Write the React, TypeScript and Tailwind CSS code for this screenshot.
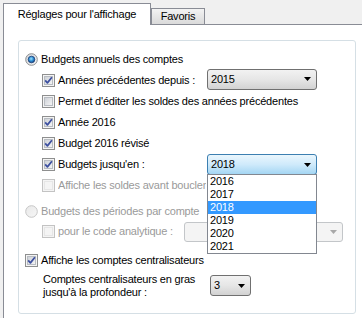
import React from "react";

function CheckBox({ checked = false, disabled = false }: { checked?: boolean; disabled?: boolean }) {
  return (
    <svg width="13" height="13" viewBox="0 0 13 13" className="shrink-0">
      <defs>
        <linearGradient id={`cbg${disabled ? "d" : "n"}`} x1="0" y1="0" x2="1" y2="1">
          <stop offset="0" stopColor={disabled ? "#f4f4f4" : "#cbcfd5"} />
          <stop offset="1" stopColor={disabled ? "#f4f4f4" : "#f7f7f7"} />
        </linearGradient>
      </defs>
      <rect x="0.5" y="0.5" width="12" height="12" fill="#f4f4f4" stroke={disabled ? "#c3c3c3" : "#8e8f8f"} />
      <rect x="2.5" y="2.5" width="8" height="8" fill={`url(#cbg${disabled ? "d" : "n"})`} stroke={disabled ? "#e6e6e6" : "#b8bcc2"} />
      {checked && (
        <path d="M3.2 6.4 L5.4 8.9 L9.9 3.2" fill="none" stroke="#3c4fa0" strokeWidth="1.7" strokeLinejoin="round" />
      )}
    </svg>
  );
}

function Radio({ checked = false, disabled = false }: { checked?: boolean; disabled?: boolean }) {
  return (
    <svg width="13" height="13" viewBox="0 0 13 13" className="shrink-0">
      <defs>
        <linearGradient id={`rg${disabled ? "d" : "n"}`} x1="0" y1="0" x2="1" y2="1">
          <stop offset="0" stopColor={disabled ? "#e8e8e8" : "#cbcfd5"} />
          <stop offset="1" stopColor={disabled ? "#f7f7f7" : "#f7f7f7"} />
        </linearGradient>
        <radialGradient id="rdot" cx="0.45" cy="0.4" r="0.6">
          <stop offset="0" stopColor="#9ce2fb" />
          <stop offset="0.55" stopColor="#2f8fd6" />
          <stop offset="1" stopColor="#14437f" />
        </radialGradient>
      </defs>
      <circle cx="6.5" cy="6.5" r="5.8" fill={`url(#rg${disabled ? "d" : "n"})`} stroke={disabled ? "#c6c6c6" : "#8e8f8f"} strokeWidth="1" />
      {checked && <circle cx="6.5" cy="6.5" r="3.3" fill="url(#rdot)" stroke="#1b3f78" strokeWidth="0.8" />}
    </svg>
  );
}

function Arrow({ color = "#000" }: { color?: string }) {
  return (
    <svg width="7" height="4" viewBox="0 0 7 4" className="shrink-0">
      <path d="M0 0 H7 L3.5 4 Z" fill={color} />
    </svg>
  );
}

export default function App() {
  return (
    <div className="w-[362px] h-[318px] overflow-hidden bg-[#f0f0f0] text-[11px] leading-[13px] tracking-[-0.2px] text-black font-['Liberation_Sans',Arial,sans-serif]">
      {/* Tabs */}
      <div className="relative z-10 -mb-px flex h-[25px] items-end pl-[3px]">
        <div className="flex h-[22px] w-[148px] items-center justify-center border border-b-0 border-[#898c95] bg-white">
          Réglages pour l'affichage
        </div>
        <div className="mb-px flex h-[16px] w-[54px] items-center justify-center border border-b-0 border-[#898c95] bg-gradient-to-b from-[#f3f3f3] to-[#dadada]">
          Favoris
        </div>
      </div>

      {/* Panel */}
      <div className="ml-[3px] h-[294px] border-l border-t border-[#898c95] bg-white pl-[14px] pt-[15px]">
        <div className="relative h-[274px] w-[338px] rounded-[3px] border border-[#d5dfe5] px-[6px]">
          {/* Row 1 */}
          <div className="mt-[8px] flex h-[21px] items-center gap-[3px]">
            <Radio checked />
            <span>Budgets annuels des comptes</span>
          </div>
          {/* Row 2 */}
          <div className="flex h-[21px] items-center pl-[17px]">
            <CheckBox checked />
            <span className="ml-[3px] w-[149px]">Années précédentes depuis :</span>
            <div className="-mt-[3px] flex h-[21px] w-[110px] items-center justify-between rounded-[3px] border border-[#707070] bg-gradient-to-b from-[#f2f2f2] via-[#e6e6e6] to-[#d2d2d2] pl-[3px] pr-[5px]">
              <span className="text-[11px]">2015</span>
              <Arrow />
            </div>
          </div>
          {/* Row 3 */}
          <div className="flex h-[21px] items-center gap-[3px] pl-[17px]">
            <CheckBox />
            <span>Permet d'éditer les soldes des années précédentes</span>
          </div>
          {/* Row 4 */}
          <div className="flex h-[21px] items-center gap-[3px] pl-[17px]">
            <CheckBox checked />
            <span>Année 2016</span>
          </div>
          {/* Row 5 */}
          <div className="flex h-[21px] items-center gap-[3px] pl-[17px]">
            <CheckBox checked />
            <span>Budget 2016 révisé</span>
          </div>
          {/* Row 6 */}
          <div className="flex h-[21px] items-center pl-[17px]">
            <CheckBox checked />
            <span className="ml-[3px] w-[149px]">Budgets jusqu'en :</span>
            <div className="relative z-20">
              <div className="flex h-[21px] w-[110px] items-center justify-between rounded-[3px] border border-[#3c7fb1] bg-gradient-to-b from-[#eaf6fd] via-[#cfeafb] to-[#a4d6f3] pl-[3px] pr-[5px]">
                <span>2018</span>
                <Arrow />
              </div>
              <div className="absolute left-0 top-[20px] w-[110px] border border-[#828790] bg-white">
                {["2016", "2017", "2018", "2019", "2020", "2021"].map((y) => (
                  <div
                    key={y}
                    className={
                      y === "2018"
                        ? "flex h-[13px] items-center bg-[#3399ff] pl-[2px] text-white"
                        : "flex h-[13px] items-center pl-[2px]"
                    }
                  >
                    {y}
                  </div>
                ))}
              </div>
            </div>
          </div>
          {/* Row 7 */}
          <div className="flex h-[20px] items-center gap-[3px] pl-[17px] text-[#9a9a9a]">
            <CheckBox disabled />
            <span className="w-[148px] overflow-hidden whitespace-nowrap">Affiche les soldes avant bouclement</span>
          </div>
          {/* Row 8 */}
          <div className="mt-[6px] flex h-[20px] items-center gap-[3px] text-[#9a9a9a]">
            <Radio disabled />
            <span>Budgets des périodes par compte</span>
          </div>
          {/* Row 9 */}
          <div className="flex h-[21px] items-center pl-[17px] text-[#9a9a9a]">
            <CheckBox disabled />
            <span className="ml-[3px] w-[126px]">pour le code analytique :</span>
            <div className="flex h-[20px] w-[159px] items-center justify-end rounded-[3px] border border-[#c3c6c9] bg-[#f4f4f4] pr-[5px]">
              <Arrow color="#a8a8a8" />
            </div>
          </div>
          {/* Row 10 */}
          <div className="mt-[8px] flex h-[21px] items-center gap-[3px]">
            <CheckBox checked />
            <span>Affiche les comptes centralisateurs</span>
          </div>
          {/* Row 11 */}
          <div className="mt-[4px] flex h-[21px] items-center pl-[18px]">
            <span className="w-[167px]">
              Comptes centralisateurs en gras
              <br />
              jusqu'à la profondeur :
            </span>
            <div className="flex h-[21px] w-[41px] items-center justify-between rounded-[3px] border border-[#707070] bg-gradient-to-b from-[#f2f2f2] via-[#e6e6e6] to-[#d2d2d2] pl-[3px] pr-[5px]">
              <span>3</span>
              <Arrow />
            </div>
          </div>
        </div>
      </div>
    </div>
  );
}
